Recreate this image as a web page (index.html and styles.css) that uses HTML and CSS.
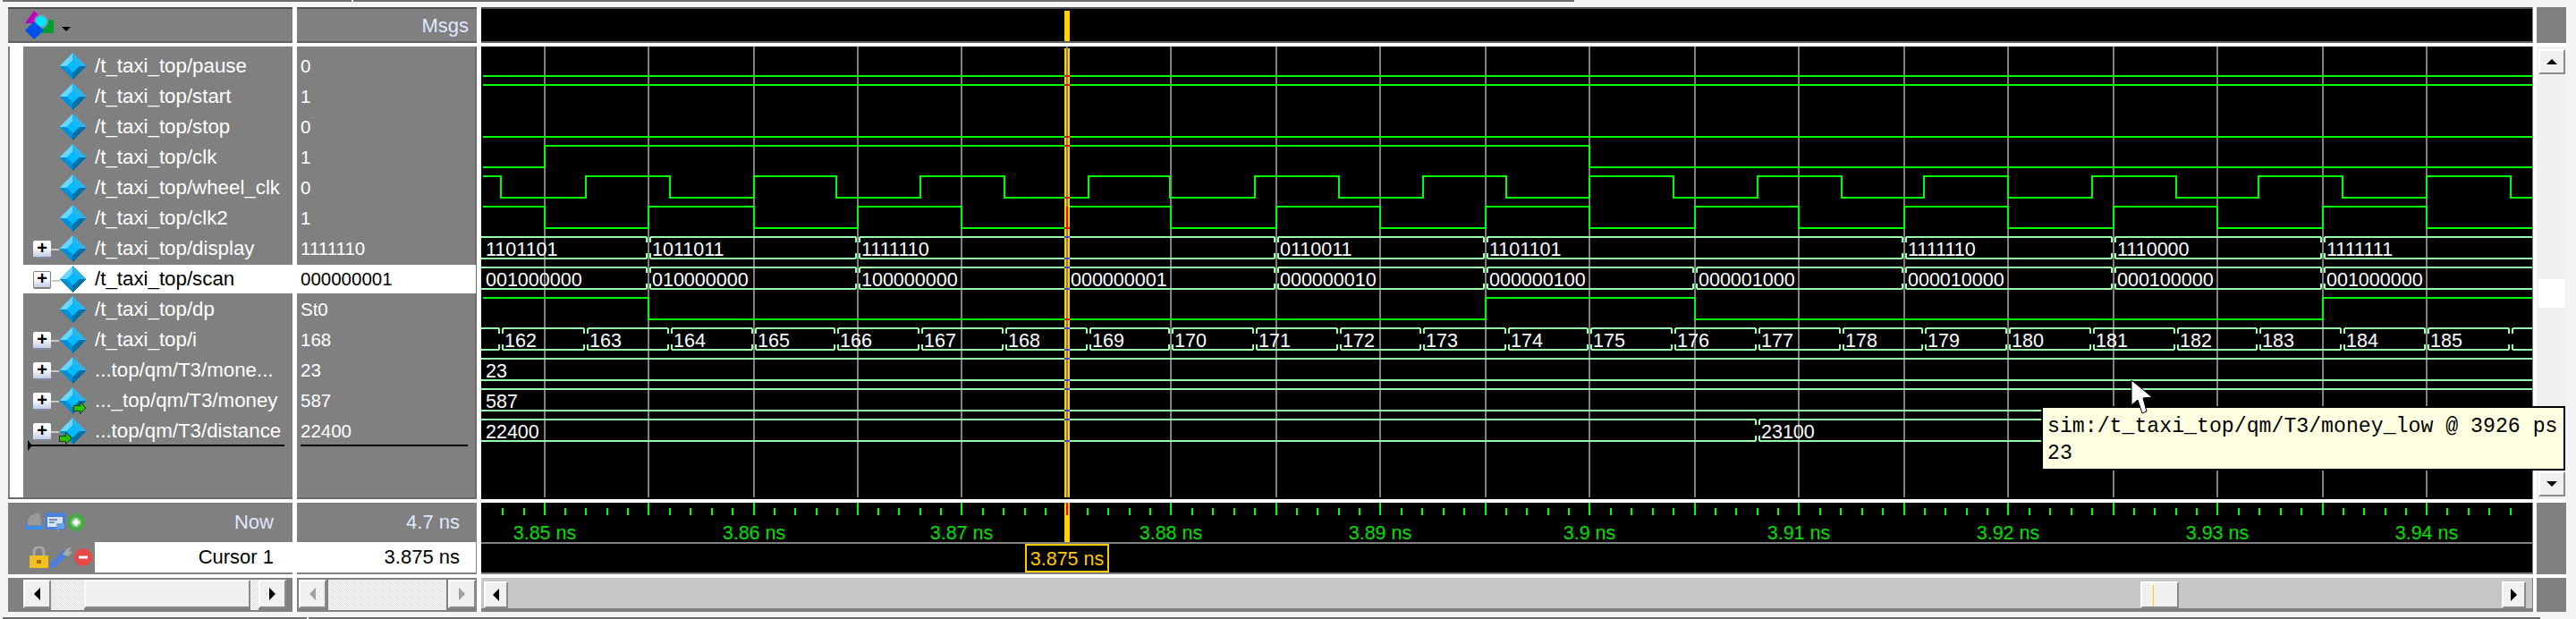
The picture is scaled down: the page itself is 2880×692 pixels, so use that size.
FILE: index.html
```html
<!DOCTYPE html>
<html lang="en">
<head>
    <meta charset="UTF-8">
    <title>Wave</title>
    <link rel="stylesheet" href="styles.css">
</head>
<body>
    <svg class="defs" width="0" height="0">
        <symbol id="sig" viewBox="0 0 30 30">
            <polygon points="15,0 0,15 8,15 15,8" fill="#66d8ff"/>
            <polygon points="15,0 30,15 22,15 15,8" fill="#28b4ee"/>
            <polygon points="30,15 15,30 15,22 22,15" fill="#006fa8"/>
            <polygon points="0,15 15,30 15,22 8,15" fill="#0090d8"/>
            <polygon points="15,8 22,15 15,22 8,15" fill="#00bcff"/>
        </symbol>
        <symbol id="arrow" viewBox="0 0 14 14">
            <polygon points="0,4 7,4 7,0 14,7 7,14 7,10 0,10" fill="#28c000" stroke="#104000" stroke-width="1"/>
        </symbol>
    </svg>

    <div id="app">
        <div class="strip top-strip"><span class="strip-a"></span><span class="strip-b"></span></div>

        <div class="panes">
            <!-- header row -->
            <div class="cell head names-head">
                <svg class="logo" width="34" height="34" viewBox="0 0 34 34">
                    <polygon points="10,0 18,8 18,14 0,14" fill="#c000c0"/>
                    <rect x="18" y="10" width="14" height="15" fill="#00a030"/>
                    <circle cx="18" cy="12" r="8" fill="#8090a0"/>
                    <circle cx="18" cy="12" r="6" fill="#00e8ff"/>
                    <polygon points="10,12 21,22 10,32 0,22" fill="#0050f0"/>
                </svg>
                <span class="drop"></span>
            </div>
            <div class="cell head values-head">Msgs</div>
            <div class="cell head wave-head">
                <svg width="2293" height="36" viewBox="538 10 2293 36"><rect x="1190" y="12" width="6" height="34" fill="#ffd000"/></svg>
            </div>
            <div class="cell head side-head"></div>

            <!-- signal rows -->
            <div class="cell names">
                <div class="row"><span class="exp none"></span><svg class="icon"><use href="#sig"/></svg><span>/t_taxi_top/pause</span></div>
                <div class="row"><span class="exp none"></span><svg class="icon"><use href="#sig"/></svg><span>/t_taxi_top/start</span></div>
                <div class="row"><span class="exp none"></span><svg class="icon"><use href="#sig"/></svg><span>/t_taxi_top/stop</span></div>
                <div class="row"><span class="exp none"></span><svg class="icon"><use href="#sig"/></svg><span>/t_taxi_top/clk</span></div>
                <div class="row"><span class="exp none"></span><svg class="icon"><use href="#sig"/></svg><span>/t_taxi_top/wheel_clk</span></div>
                <div class="row"><span class="exp none"></span><svg class="icon"><use href="#sig"/></svg><span>/t_taxi_top/clk2</span></div>
                <div class="row"><span class="exp">+</span><svg class="icon"><use href="#sig"/></svg><span>/t_taxi_top/display</span></div>
                <div class="row selected"><span class="exp">+</span><svg class="icon"><use href="#sig"/></svg><span>/t_taxi_top/scan</span></div>
                <div class="row"><span class="exp none"></span><svg class="icon"><use href="#sig"/></svg><span>/t_taxi_top/dp</span></div>
                <div class="row"><span class="exp">+</span><svg class="icon"><use href="#sig"/></svg><span>/t_taxi_top/i</span></div>
                <div class="row"><span class="exp">+</span><svg class="icon"><use href="#sig"/></svg><span>...top/qm/T3/mone...</span></div>
                <div class="row"><span class="exp">+</span><svg class="icon" viewBox="0 0 30 30"><use href="#sig" width="30" height="30"/><use href="#arrow" x="16" y="16" width="14" height="14"/></svg><span>..._top/qm/T3/money</span></div>
                <div class="row"><span class="exp">+</span><svg class="icon" viewBox="0 0 30 30"><use href="#sig" width="30" height="30"/><use href="#arrow" x="0" y="16" width="14" height="14"/></svg><span>...top/qm/T3/distance</span></div>
                <div class="drop-line names-line"></div>
                <span class="drop-tip"></span>
            </div>
            <div class="cell values">
                <div class="row">0</div>
                <div class="row">1</div>
                <div class="row">0</div>
                <div class="row">1</div>
                <div class="row">0</div>
                <div class="row">1</div>
                <div class="row">1111110</div>
                <div class="row selected">000000001</div>
                <div class="row">St0</div>
                <div class="row">168</div>
                <div class="row">23</div>
                <div class="row">587</div>
                <div class="row">22400</div>
                <div class="drop-line values-line"></div>
            </div>
            <div class="cell wave"><svg id="wave" width="2293" height="504" viewBox="538 52 2293 504"></svg></div>
            <div class="cell side">
                <div class="btn v-btn"><i class="arrow up"></i></div>
                <div class="v-track"><div class="v-thumb"></div></div>
                <div class="btn v-btn"><i class="arrow down"></i></div>
            </div>

            <!-- now / cursor rows -->
            <div class="cell foot">
                <div class="now">
                    <span class="tools">
                        <svg width="20" height="20" viewBox="0 0 20 20">
                            <path d="M3,8 L6,2 H10 L11,0 H16 L18,8 V13 H3 Z" fill="#9a9a9a"/>
                            <path d="M1,11 V17 H19 V11 M1,15 H19" fill="none" stroke="#3c8ce8" stroke-width="2"/>
                        </svg>
                        <svg width="23" height="22" viewBox="0 0 23 22">
                            <rect width="23" height="19" rx="2" fill="#4c80d8"/>
                            <rect x="3" y="5" width="17" height="11" fill="#d8e4f4"/>
                            <path d="M5,8 H14 M5,11 H11" stroke="#7090c0" stroke-width="2"/>
                            <polygon points="13,12 22,12 22,18 16,18 14,22" fill="#6aa0e8"/>
                        </svg>
                        <svg width="20" height="20" viewBox="0 0 20 20">
                            <circle cx="10" cy="10" r="10" fill="#48a848"/>
                            <circle cx="10" cy="10" r="6" fill="#70c870"/>
                            <path d="M10,6 V14 M6,10 H14" stroke="#fff" stroke-width="3"/>
                        </svg>
                    </span>
                    <span class="foot-label">Now</span>
                </div>
                <div class="cursor-row">
                    <span class="tools tools-low">
                        <svg width="21" height="24" viewBox="0 0 21 24">
                            <path d="M5,11 V6 A5,5 0 0 1 16,6 V11" fill="none" stroke="#a8a8a8" stroke-width="3"/>
                            <rect y="10" width="21" height="14" fill="#f0c020"/>
                            <rect x="8" y="15" width="5" height="4" fill="#a07010"/>
                        </svg>
                        <svg width="25" height="24" viewBox="0 0 25 24">
                            <path d="M3,21 L16,8" stroke="#4c80d8" stroke-width="7" stroke-linecap="round"/>
                            <path d="M14,9 L18,3 L24,0 L21,5 L25,6 L20,11 Z" fill="#a8a8a8"/>
                        </svg>
                        <svg width="20" height="20" viewBox="0 0 20 20">
                            <circle cx="10" cy="10" r="10" fill="#e84848"/>
                            <path d="M5,10 H15" stroke="#fff" stroke-width="3"/>
                        </svg>
                    </span>
                    <span class="foot-label cursor-name">Cursor 1</span>
                </div>
            </div>
            <div class="cell foot values-foot">
                <div class="now">4.7 ns</div>
                <div class="cursor-row">3.875 ns</div>
            </div>
            <div class="cell wave"><svg id="ruler" width="2293" height="80" viewBox="538 562 2293 80"></svg></div>
            <div class="cell side-foot"></div>

            <!-- scrollbars -->
            <div class="cell scroll names-scroll">
                <div class="btn h-btn"><i class="arrow left"></i></div>
                <div class="dither dither-a"></div>
                <div class="btn thumb"></div>
                <div class="dither dither-b"></div>
                <div class="btn h-btn"><i class="arrow right"></i></div>
            </div>
            <div class="cell scroll values-scroll">
                <div class="btn h-btn"><i class="arrow left off"></i></div>
                <div class="dither dither-c"></div>
                <div class="btn h-btn"><i class="arrow right off"></i></div>
            </div>
            <div class="cell wave-scroll">
                <div class="btn w-btn"><i class="arrow left"></i></div>
                <div class="w-track"><div class="btn w-thumb"></div></div>
                <div class="btn w-btn"><i class="arrow right"></i></div>
            </div>
            <div class="cell side-foot"></div>
        </div>

        <div class="strip bottom-strip"><span class="strip-c"></span><span class="strip-d"></span></div>

        <div class="tip">sim:/t_taxi_top/qm/T3/money_low @ 3926 ps<br>23</div>
        <svg class="mouse" width="26" height="40" viewBox="0 0 26 40">
            <polygon points="1,1 1,29 8,23 13,38 18,36 14,21 24,20" fill="#fff" stroke="#000" stroke-width="1"/>
        </svg>
    </div>

    <script src="wave.js"></script>
</body>
</html>
```

FILE: styles.css
```css
* {
    box-sizing: border-box;
}

html, body {
    margin: 0;
    padding: 0;
    background: #f4f4f4;
}

body {
    font-family: "Liberation Sans", Arial, sans-serif;
    font-size: 22px;
    color: #fff;
}

.defs {
    position: absolute;
}

#app {
    position: relative;
    width: 2880px;
    height: 692px;
    padding-left: 3px;
    overflow: hidden;
}

.strip {
    display: flex;
    gap: 2px;
    height: 2px;
}

.strip span {
    background: #6d6d6d;
}

.top-strip {
    margin-bottom: 6px;
}

.strip-a { width: 390px; }
.strip-b { width: 1365px; }

.bottom-strip {
    margin-top: 6px;
}

.strip-c { width: 340px; }
.strip-d { width: 2495px; }

.panes {
    display: grid;
    grid-template-columns: 318px 201px 2293px 33px;
    grid-template-rows: 40px 506px 80px 38px;
    gap: 4px 5px;
    margin-left: 6px;
    width: 2860px;
    background: #fff;
}

.cell {
    background: #808080;
}

.head {
    border-top: 2px solid #505050;
    border-bottom: 2px solid #606060;
}

.names-head {
    display: flex;
    align-items: flex-start;
    padding: 2px 0 0 19px;
}

.drop {
    width: 0;
    height: 0;
    margin: 18px 0 0 7px;
    border: 5px solid transparent;
    border-top-color: #000;
    border-bottom: 0;
}

.values-head {
    padding: 6px 9px 0 0;
    text-align: right;
    line-height: 26px;
    color: #dfe8ff;
}

.wave-head {
    background: #000;
    box-shadow: 1px 0 0 #808080;
}

.wave-head svg,
.wave svg {
    display: block;
}

.names {
    position: relative;
    padding: 6px 0 0 17px;
    border-bottom: 2px solid #6a6a6a;
    font-size: 22.3px;
    background: linear-gradient(to right, #808080 2px, #fff 2px, #fff 17px, #808080 17px);
}

.values {
    position: relative;
    padding-top: 6px;
    border-bottom: 2px solid #6a6a6a;
    font-size: 20.5px;
    box-shadow: inset -2px 0 0 #6a6a6a;
}

.row {
    display: flex;
    align-items: center;
    height: 32px;
    margin-bottom: 2px;
    white-space: nowrap;
}

.values .row {
    padding-left: 4px;
}

.selected {
    background: #fff;
    color: #000;
}

.values .selected {
    margin-right: 1px;
}

.exp {
    position: relative;
    flex: none;
    width: 20px;
    height: 20px;
    margin: 2px 9px 0 11px;
    border-radius: 2px;
    background: linear-gradient(#fff 40%, #c4cce4);
    border-bottom: 2px solid #8088a0;
    color: #000;
    font: bold 20px/17px "Liberation Sans", sans-serif;
    text-align: center;
}

.exp::after {
    content: "";
    position: absolute;
    left: 20px;
    top: 9px;
    width: 9px;
    height: 2px;
    background: #c8c8c8;
}

.selected .exp {
    border: 1px solid #808080;
    border-bottom: 2px solid #808080;
    line-height: 15px;
}

.exp.none {
    visibility: hidden;
}

.icon {
    flex: none;
    width: 30px;
    height: 30px;
    margin-right: 10px;
    shape-rendering: crispEdges;
}

.drop-line {
    position: absolute;
    top: 445px;
    height: 2px;
    background: #000;
}

.names-line {
    left: 23px;
    width: 286px;
}

.values-line {
    left: 4px;
    width: 187px;
}

.drop-tip {
    position: absolute;
    left: 22px;
    top: 440px;
    border-left: 5px solid #000;
    border-top: 6px solid transparent;
    border-bottom: 6px solid transparent;
}

.wave {
    background: #000;
    box-shadow: 1px 0 0 #808080;
}

.side-head {
    background: #808080;
    border-color: #808080;
}

.side {
    display: flex;
    flex-direction: column;
    padding: 3px 1px 3px 2px;
    background: #f0f0f0;
}

.btn {
    background: #f0f0f0;
    border: 2px solid;
    border-color: #fff #8a8a8a #8a8a8a #fff;
}

.v-btn {
    flex: none;
    display: flex;
    align-items: center;
    justify-content: center;
    height: 28px;
}

.v-track {
    flex: 1;
    padding-top: 229px;
}

.v-thumb {
    height: 32px;
    background: #fff;
}

.arrow {
    display: block;
    width: 0;
    height: 0;
    border: 7px solid transparent;
}

.arrow.up {
    border-width: 0 6px 6px;
    border-bottom-color: #000;
}

.arrow.down {
    border-width: 6px 6px 0;
    border-top-color: #000;
}

.arrow.left {
    border-width: 7px 7px 7px 0;
    border-right-color: #000;
}

.arrow.right {
    border-width: 7px 0 7px 7px;
    border-left-color: #000;
}

.arrow.left.off {
    border-right-color: #a0a0a0;
}

.arrow.right.off {
    border-left-color: #a0a0a0;
}

.foot .now {
    display: flex;
    align-items: center;
    justify-content: space-between;
    height: 44px;
}

.foot-label {
    padding-right: 21px;
    color: #dfe8ff;
}

.cursor-row {
    display: flex;
    align-items: center;
    justify-content: space-between;
    height: 34px;
}

.tools {
    display: flex;
    align-items: center;
    gap: 2px;
    padding-left: 19px;
}

.tools-low {
    padding-left: 24px;
}

.cursor-name {
    display: block;
    width: 221px;
    height: 34px;
    background: #fff;
    color: #000;
    line-height: 34px;
    text-align: right;
}

.values-foot .now {
    display: block;
    padding-right: 19px;
    line-height: 44px;
    text-align: right;
    color: #dfe8ff;
}

.values-foot .cursor-row {
    display: block;
    margin-right: 1px;
    padding-right: 18px;
    background: #fff;
    color: #000;
    line-height: 34px;
    text-align: right;
}

.side-foot {
    background: #808080;
}

.scroll {
    display: flex;
    align-items: flex-start;
    padding-top: 2px;
}

.names-scroll {
    padding-left: 17px;
}

.values-scroll {
    padding-left: 2px;
    gap: 2px;
}

.h-btn {
    flex: none;
    display: flex;
    align-items: center;
    justify-content: center;
    width: 31px;
    height: 32px;
}

.dither {
    height: 34px;
    background: repeating-conic-gradient(#fff 0 25%, #dcdcdc 0 50%) 0 0 / 2px 2px;
}

.dither-a { width: 37px; }
.dither-b { width: 9px; }
.dither-c { width: 132px; }

.thumb {
    width: 186px;
    height: 32px;
}

.wave-scroll {
    display: flex;
    justify-content: space-between;
    padding: 0 7px 0 3px;
    height: 38px;
    background: #c6c6c6;
    border-top: 4px solid #707070;
    border-bottom: 4px solid;
    border-image: linear-gradient(#fff 50%, #808080 50%) 1;
    border-image-slice: 0 0 4 0;
    border-image-width: 0 0 4px 0;
    box-shadow: 1px 0 0 #808080;
}

.w-btn {
    flex: none;
    display: flex;
    align-items: center;
    justify-content: center;
    width: 27px;
    height: 30px;
}

.w-track {
    flex: 1;
    padding-left: 1825px;
}

.w-thumb {
    position: relative;
    width: 43px;
    height: 30px;
}

.w-thumb::before {
    content: "";
    position: absolute;
    left: 12px;
    top: 2px;
    width: 1px;
    height: 24px;
    background: #ffd000;
}

.wave-text {
    font-family: "Liberation Sans", Arial, sans-serif;
    font-size: 21.5px;
    fill: #fff;
}

.ruler-text {
    font-family: "Liberation Sans", Arial, sans-serif;
    font-size: 21.5px;
    fill: #00e000;
    text-anchor: middle;
}

.marker-text {
    fill: #ffc800;
}

.tip {
    position: absolute;
    left: 2282px;
    top: 454px;
    width: 586px;
    height: 72px;
    padding: 6px 0 0 5px;
    border: 2px solid #000;
    background: #ffffe1;
    color: #000;
    font-family: "Liberation Mono", "Courier New", monospace;
    font-size: 23.2px;
    line-height: 30px;
    white-space: nowrap;
}

.mouse {
    position: absolute;
    left: 2382px;
    top: 424px;
}
```

FILE: wave.js
```js
const GRID = [609, 725, 843, 959, 1075, 1193, 1309, 1427, 1543, 1661, 1777, 1895, 2011, 2129, 2245, 2363, 2479, 2597, 2713];
const LEFT = 538, RIGHT = 2831, CURSOR = 1193;
const GREEN = '#00ff00', BUS = '#99ffaa', GRAY = '#808080', YELLOW = '#ffd000';

function hi(row) { return 61 + row * 34; }
function lo(row) { return 85 + row * 34; }

function line(x1, y1, x2, y2, color, width) {
    return `<line x1="${x1}" y1="${y1}" x2="${x2}" y2="${y2}" stroke="${color}" stroke-width="${width || 2}" shape-rendering="crispEdges"/>`;
}

function box(x, y, w, h, color) {
    return `<rect x="${x}" y="${y}" width="${w}" height="${h}" fill="${color}"/>`;
}

// one bit signal, flips at every x in the list
function signal(row, high, flips) {
    let y = high ? hi(row) : lo(row);
    let d = `M540,${y}`;
    flips.forEach(x => {
        y = y === hi(row) ? lo(row) : hi(row);
        d += ` H${x} V${y}`;
    });
    d += ` H${RIGHT}`;
    return `<path d="${d}" fill="none" stroke="${GREEN}" stroke-width="2" shape-rendering="crispEdges"/>`;
}

// vector signal, changes is a list of [x, label]
function bus(row, changes) {
    const top = hi(row), bot = lo(row);
    let out = '';
    changes.forEach((c, i) => {
        const x = c[0];
        const next = i + 1 < changes.length ? changes[i + 1][0] : null;
        const from = i === 0 ? LEFT : x + 2;
        const to = next === null ? RIGHT : next - 2;
        out += line(from, top, to, top, BUS) + line(from, bot, to, bot, BUS);
        if (i > 0) {
            out += line(x + 2, top, x + 2, top + 6, BUS) + line(x + 2, bot - 6, x + 2, bot, BUS);
        }
        if (next !== null) {
            out += line(to, top, to, top + 6, BUS) + line(to, bot - 6, to, bot, BUS);
        }
        if (c[1]) {
            const tx = i === 0 ? x + 5 : x + 4;
            out += `<text class="wave-text" x="${tx}" y="${top + 21}">${c[1]}</text>`;
        }
    });
    return out;
}

function mark(y, color) {
    return box(CURSOR - 3, y - 1, 6, 2, color);
}

function drawWave() {
    let s = '';
    GRID.forEach(x => { s += line(x, 52, x, 556, GRAY); });

    s += signal(0, false, []);
    s += signal(1, true, []);
    s += signal(2, false, []);
    s += signal(3, false, [609, 1777]);
    s += signal(4, true, [560, 655, 749, 843, 935, 1029, 1123, 1217, 1308, 1403, 1497, 1591, 1684, 1777, 1871, 1965, 2059, 2151, 2245, 2339, 2433, 2525, 2619, 2713, 2807]);
    s += signal(5, true, GRID);
    s += bus(6, [[538, '1101101'], [725, '1011011'], [959, '1111110'], [1427, '0110011'], [1661, '1101101'], [2129, '1111110'], [2363, '1110000'], [2597, '1111111']]);
    s += bus(7, [[538, '001000000'], [725, '010000000'], [959, '100000000'], [1193, '000000001'], [1427, '000000010'], [1661, '000000100'], [1895, '000001000'], [2129, '000010000'], [2363, '000100000'], [2597, '001000000']]);
    s += signal(8, true, [725, 1661, 1895, 2597]);

    const counts = [[538, '']];
    [560, 655, 749, 843, 935, 1029, 1123, 1217, 1309, 1403, 1497, 1590, 1685, 1777, 1871, 1965, 2059, 2151, 2245, 2339, 2433, 2525, 2619, 2713].forEach((x, i) => {
        counts.push([x, String(162 + i)]);
    });
    counts.push([2807, '']);
    s += bus(9, counts);

    s += bus(10, [[538, '23']]);
    s += bus(11, [[538, '587']]);
    s += bus(12, [[538, '22400'], [1965, '23100']]);

    // cursor sits on top of everything
    s += box(CURSOR - 3, 54, 6, 502, YELLOW);
    s += line(CURSOR, 54, CURSOR, 556, GRAY, 2);
    [lo(0), hi(1), lo(2), hi(3), lo(4), lo(5), lo(8)].forEach(y => { s += mark(y, '#ff0000'); });
    s += line(CURSOR, hi(5), CURSOR, lo(5), '#ff0000');
    [6, 7, 9, 10, 11, 12].forEach(r => {
        s += mark(hi(r), '#5040c0') + mark(lo(r), '#5040c0');
    });
    document.getElementById('wave').innerHTML = s;
}

function drawRuler() {
    let s = '';
    const labels = ['3.85', '3.86', '3.87', '3.88', '3.89', '3.9', '3.91', '3.92', '3.93', '3.94'];
    GRID.forEach((x, i) => {
        s += line(x, 562, x, 576, GREEN);
        const next = GRID[i + 1] || x + 117;
        for (let k = 1; k < 5; k++) {
            const mx = Math.round(x + (next - x) * k / 5);
            s += line(mx, 568, mx, 576, GREEN);
        }
        if (i % 2 === 0) {
            s += `<text class="ruler-text" x="${x}" y="603">${labels[i / 2]} ns</text>`;
        }
    });
    s += line(562, 568, 562, 576, GREEN) + line(586, 568, 586, 576, GREEN);
    s += box(LEFT, 606, RIGHT - LEFT, 2, GRAY) + box(LEFT, 640, RIGHT - LEFT, 2, GRAY);
    s += box(CURSOR - 3, 562, 6, 44, YELLOW);
    s += line(CURSOR, 562, CURSOR, 576, '#ff0000');
    s += `<rect x="1147" y="609" width="92" height="30" fill="#000" stroke="#ffc800" stroke-width="2"/>`;
    s += `<text class="ruler-text marker-text" x="1193" y="632">3.875 ns</text>`;
    document.getElementById('ruler').innerHTML = s;
}

drawWave();
drawRuler();
```
